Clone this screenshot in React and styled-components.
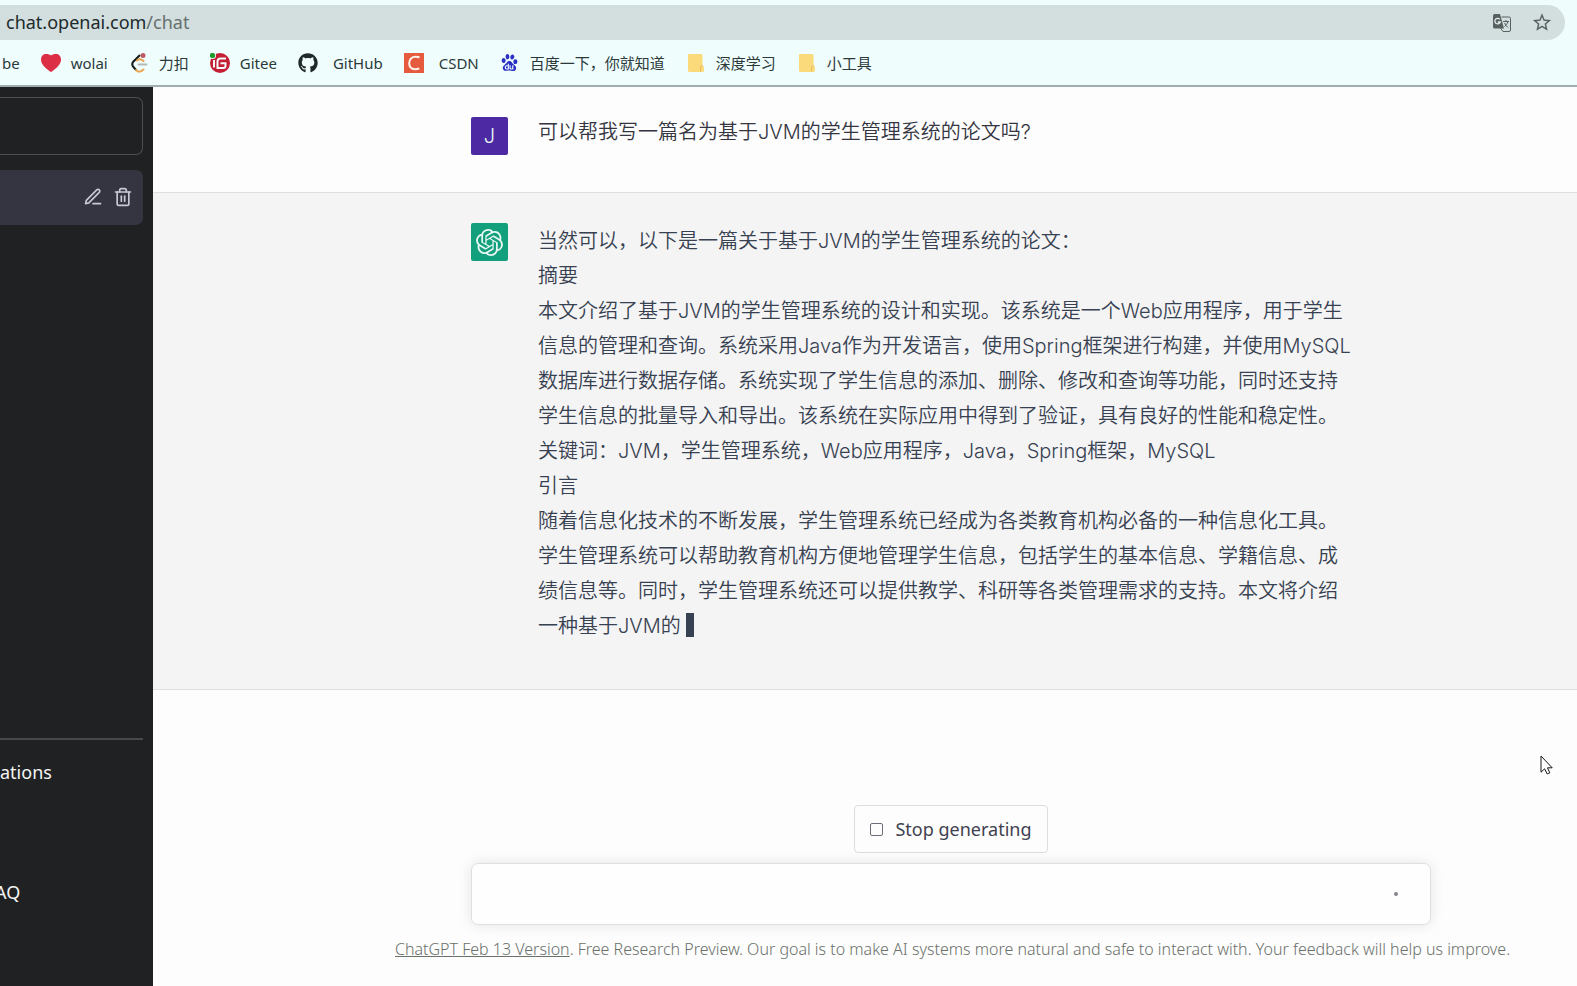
import React from "react";
import styled, { createGlobalStyle } from "styled-components";
import { FiEdit3, FiTrash2 } from "react-icons/fi";
import { FaGithub } from "react-icons/fa";
import { SiBaidu, SiOpenai } from "react-icons/si";
import { MdStarBorder } from "react-icons/md";

const bookmarks = [
  { label: "wolai", icon: <HeartIcon /> },
  { label: "力扣", icon: <LeetCodeIcon /> },
  { label: "Gitee", icon: <GiteeIcon /> },
  { label: "GitHub", icon: <FaGithub size={20} color="#20292c" />, wide: true },
  { label: "CSDN", icon: <CsdnIcon />, wide: true },
  { label: "百度一下，你就知道", icon: <SiBaidu size={17} color="#2a2fc4" /> },
  { label: "深度学习", icon: <FolderIcon /> },
  { label: "小工具", icon: <FolderIcon /> },
];

const answer = [
  "当然可以，以下是一篇关于基于JVM的学生管理系统的论文：",
  "摘要",
  "本文介绍了基于JVM的学生管理系统的设计和实现。该系统是一个Web应用程序，用于学生",
  "信息的管理和查询。系统采用Java作为开发语言，使用Spring框架进行构建，并使用MySQL",
  "数据库进行数据存储。系统实现了学生信息的添加、删除、修改和查询等功能，同时还支持",
  "学生信息的批量导入和导出。该系统在实际应用中得到了验证，具有良好的性能和稳定性。",
  "关键词：JVM，学生管理系统，Web应用程序，Java，Spring框架，MySQL",
  "引言",
  "随着信息化技术的不断发展，学生管理系统已经成为各类教育机构必备的一种信息化工具。",
  "学生管理系统可以帮助教育机构方便地管理学生信息，包括学生的基本信息、学籍信息、成",
  "绩信息等。同时，学生管理系统还可以提供教学、科研等各类管理需求的支持。本文将介绍",
  "一种基于JVM的",
];

function HeartIcon() {
  return (
    <svg width="20" height="20" viewBox="0 0 20 20">
      <path d="M10 19C7 17 0 12.500 0 6.500C0 3 2.300 1 5 1C7.200 1 9 1.500 10 2.500C11 1.500 12.800 1 15 1C17.700 1 20 3 20 6.500C20 12.500 13 17 10 19Z" fill="#dc2e44" />
    </svg>
  );
}

function LeetCodeIcon() {
  return (
    <svg width="20" height="20" viewBox="0 0 20 20" fill="none" strokeWidth="2" strokeLinecap="round">
      <path d="M10.500 2.500L4 9Q2.500 11 4 13.500L7 17" stroke="#15191a" />
      <path d="M7 17Q10.500 20.500 14.500 16.500M8 7.500Q11 4.500 14.500 8" stroke="#e9a653" />
      <path d="M9.500 11.500H17.500" stroke="#b5b8b5" />
      <circle cx="14" cy="2.500" r="2.500" fill="#bd5a63" />
    </svg>
  );
}

function GiteeIcon() {
  return (
    <svg width="20" height="20" viewBox="0 0 20 20" fill="none">
      <circle cx="10" cy="10" r="10" fill="#c51f35" />
      <path d="M16 5.500H10.500Q7.500 5.500 7.500 8.500V15H13.500Q15.500 15 15.500 12.500V10.300H10.500" stroke="#f5fcfa" strokeWidth="2" />
      <path d="M4 7V14.500" stroke="#f5fcfa" strokeWidth="2" />
      <circle cx="2.500" cy="2.500" r="3.500" fill="#effdfc" />
      <circle cx="2.500" cy="2.500" r="2.600" fill="#1b9b2c" />
    </svg>
  );
}

function CsdnIcon() {
  return (
    <svg width="20" height="20" viewBox="0 0 20 20" fill="none">
      <rect width="20" height="20" fill="#e65a3d" />
      <path d="M15.500 4.500Q14 3.700 11.800 3.700C7.500 3.700 5.200 6.500 5.200 10.300C5.200 14 7.500 16.200 11 16.200Q13.500 16.200 15.300 15.300" stroke="#fff3ee" strokeWidth="2" />
    </svg>
  );
}

function FolderIcon() {
  return (
    <svg width="16" height="18" viewBox="0 0 16 18">
      <path d="M1 0H13Q14.500 0 14.500 1.500V11L16 13V16.500Q16 18 14.500 18H1.500Q0 18 0 16.500V1Q0 0 1 0Z" fill="#fbda7b" />
      <path d="M14.500 11.500Q12.500 12 12.500 14V17.500" fill="none" stroke="#e5bd5c" />
    </svg>
  );
}

function TranslateIcon() {
  return (
    <svg width="18" height="18" viewBox="0 0 18 18" fill="none">
      <path d="M8.500 3H16Q17.500 3 17.500 4.500V16Q17.500 17.500 16 17.500H10L7.500 14" stroke="#58615f" />
      <path d="M1.500 0H7L11 14.500H1.500Q0 14.500 0 13V1.500Q0 0 1.500 0Z" fill="#58615f" />
      <path d="M6.800 5.300A2.800 2.800 0 1 0 7.300 8H4.800" stroke="#e2eceb" strokeWidth="1.300" />
      <path d="M10 7.500H16M13 6V7.500M15 7.500Q14 11 11.500 12.500M11.500 9Q12.500 11.500 15 13.500" stroke="#58615f" />
    </svg>
  );
}

function PointerIcon() {
  return (
    <svg width="13" height="20" viewBox="0 0 13 20">
      <path d="M1 1V17.200L4.600 13.800L7.200 19L9.800 17.800L7.500 12.800H12.200Z" fill="#fff" stroke="#15171a" />
    </svg>
  );
}

function App() {
  return (
    <Page>
      <GlobalStyle />
      <Browser>
        <AddressBar>
          <Address>
            chat.openai.com<span>/chat</span>
          </Address>
          <BarButton aria-label="Translate"><TranslateIcon /></BarButton>
          <BarButton aria-label="Bookmark"><MdStarBorder size={23} /></BarButton>
        </AddressBar>
        <Bookmarks>
          <Bookmark href="#">be</Bookmark>
          {bookmarks.map((b) => (
            <Bookmark href="#" key={b.label} $wide={b.wide}>
              <BookmarkIcon>{b.icon}</BookmarkIcon>
              {b.label}
            </Bookmark>
          ))}
        </Bookmarks>
      </Browser>

      <Body>
        <Sidebar>
          <NewChat aria-label="New chat" />
          <ChatItem>
            <IconButton aria-label="Rename"><FiEdit3 size={20} /></IconButton>
            <IconButton aria-label="Delete"><FiTrash2 size={20} /></IconButton>
          </ChatItem>
          <SideMenu>
            <SideLink href="#">ations</SideLink>
            <SideLink href="#" aria-label="Theme" />
            <SideLink href="#" $cut>AQ</SideLink>
            <SideLink href="#" aria-label="Log out" />
          </SideMenu>
        </Sidebar>

        <Main>
          <Message>
            <Avatar $color="#4d2aa3">J</Avatar>
            <Question>可以帮我写一篇名为基于JVM的学生管理系统的论文吗?</Question>
          </Message>
          <Message $reply>
            <Avatar $color="#129f7b"><SiOpenai size={27} /></Avatar>
            <Answer>
              {answer.map((line, i) => (
                <p key={line}>
                  {line}
                  {i === answer.length - 1 && <Caret />}
                </p>
              ))}
            </Answer>
          </Message>

          <Composer>
            <StopButton>
              <StopSquare />
              Stop generating
            </StopButton>
            <Prompt>
              <PromptInput aria-label="Message" />
              <Dot />
            </Prompt>
          </Composer>
          <Note>
            <a href="#">ChatGPT Feb 13 Version</a>. Free Research Preview. Our goal is to make AI systems more natural and safe to interact with. Your feedback will help us improve.
          </Note>
        </Main>
      </Body>
      <Pointer><PointerIcon /></Pointer>
    </Page>
  );
}

const GlobalStyle = createGlobalStyle`
  * {
    box-sizing: border-box;
  }

  body {
    margin: 0;
    background: #fdfdfd;
    font-family: "Noto Sans", "Noto Sans CJK SC", sans-serif;
  }

  button, input {
    font: inherit;
    color: inherit;
    border: 0;
    padding: 0;
    background: none;
  }

  a {
    color: inherit;
    text-decoration: none;
  }

  p {
    margin: 0;
  }
`;

const Page = styled.div`
  position: relative;
  display: flex;
  flex-direction: column;
  min-height: 100vh;
  overflow: hidden;
`;

const Browser = styled.header`
  padding-top: 5px;
  background: #effdfc;
  border-bottom: 2px solid #a2aeae;
`;

const AddressBar = styled.div`
  display: flex;
  align-items: center;
  gap: 18px;
  height: 35px;
  margin-right: 12px;
  padding: 0 12px 0 6px;
  border-radius: 0 18px 18px 0;
  background: #d2dfde;
`;

const Address = styled.div`
  flex: 1;
  padding-bottom: 2px;
  font-size: 18px;
  color: #20292b;

  span {
    color: #66706f;
  }
`;

const BarButton = styled.button`
  display: flex;
  align-items: center;
  justify-content: center;
  width: 22px;
  height: 22px;
  color: #58615f;
`;

const Bookmarks = styled.nav`
  display: flex;
  align-items: center;
  gap: 21px;
  height: 45px;
  padding-left: 2px;
`;

const Bookmark = styled.a`
  display: flex;
  align-items: center;
  gap: ${({ $wide }) => ($wide ? 15 : 10)}px;
  font-size: 15px;
  color: #2b393b;
  white-space: nowrap;
`;

const BookmarkIcon = styled.span`
  display: flex;
  align-items: center;
  justify-content: center;
  width: 20px;
  height: 20px;
`;

const Body = styled.div`
  display: flex;
  flex: 1;
`;

const Sidebar = styled.aside`
  display: flex;
  flex-direction: column;
  flex: 0 0 153px;
  padding: 10px 10px 4px 0;
  background: #202123;
  color: #f5f5f5;
`;

const NewChat = styled.button`
  height: 58px;
  border: 1px solid #4c4e50;
  border-left: 0;
  border-radius: 0 7px 7px 0;
`;

const ChatItem = styled.div`
  display: flex;
  align-items: center;
  justify-content: flex-end;
  gap: 10px;
  height: 55px;
  margin-top: 15px;
  padding: 0 10px 2px 0;
  border-radius: 0 7px 7px 0;
  background: #343541;
  color: #c9c8d6;
`;

const IconButton = styled.button`
  display: flex;
`;

const SideMenu = styled.nav`
  margin-top: auto;
  padding-top: 2px;
  border-top: 2px solid #48494b;
`;

const SideLink = styled.a`
  display: flex;
  align-items: center;
  height: 60px;
  margin-left: ${({ $cut }) => ($cut ? -5 : 0)}px;
  font-size: 18px;
`;

const Main = styled.main`
  display: flex;
  flex-direction: column;
  flex: 1;
  min-width: 0;
`;

const Message = styled.section`
  display: flex;
  align-items: flex-start;
  gap: 30px;
  padding: ${({ $reply }) => ($reply ? "30px 20px 45px 318px" : "30px 20px 37px 318px")};
  border-bottom: 1px solid #dfdfe0;
  background: ${({ $reply }) => ($reply ? "#f4f4f4" : "#fdfdfd")};
  font-family: Inter, "Noto Sans CJK SC", sans-serif;
  font-size: 20px;
  font-weight: 350;
`;

const Avatar = styled.div`
  display: flex;
  align-items: center;
  justify-content: center;
  flex: 0 0 37px;
  height: 38px;
  border-radius: 2px;
  background: ${({ $color }) => $color};
  color: #e8f7f4;
`;

const Question = styled.p`
  line-height: 30px;
  color: #343541;
  white-space: nowrap;
`;

const Answer = styled.div`
  padding-top: 1px;
  line-height: 35px;
  color: #374151;
  white-space: nowrap;
`;

const Caret = styled.span`
  display: inline-block;
  width: 8px;
  height: 24px;
  margin-left: 5px;
  vertical-align: -4px;
  background: #374151;
`;

const Composer = styled.form`
  display: flex;
  flex-direction: column;
  align-items: center;
  gap: 10px;
  max-width: 960px;
  margin: auto 20px 0 318px;
`;

const StopButton = styled.button.attrs({ type: "button" })`
  display: flex;
  align-items: center;
  gap: 12px;
  height: 48px;
  padding: 0 15px;
  border: 1px solid #dcdde1;
  border-radius: 4px;
  font-size: 18px;
  color: #40414f;
`;

const StopSquare = styled.span`
  width: 13px;
  height: 13px;
  border: 1px solid #6c6d76;
  border-radius: 2px;
`;

const Prompt = styled.div`
  display: flex;
  align-items: center;
  align-self: stretch;
  height: 62px;
  padding: 0 32px 0 20px;
  border: 1px solid #e0e0e1;
  border-radius: 7px;
  background: #fefefe;
  box-shadow: 0 0 14px rgba(0, 0, 0, 0.1);
`;

const PromptInput = styled.input`
  flex: 1;
  height: 30px;
  outline: 0;
  font-size: 20px;
`;

const Dot = styled.span`
  width: 4px;
  height: 4px;
  border-radius: 50%;
  background: #85868c;
`;

const Note = styled.p`
  padding: 11px 0 24px 242px;
  font-size: 16px;
  font-weight: 300;
  line-height: 26px;
  color: #6a706a;
  white-space: nowrap;

  a {
    text-decoration: underline;
  }
`;

const Pointer = styled.div`
  position: absolute;
  right: 24px;
  top: 755px;
`;

export default App;
